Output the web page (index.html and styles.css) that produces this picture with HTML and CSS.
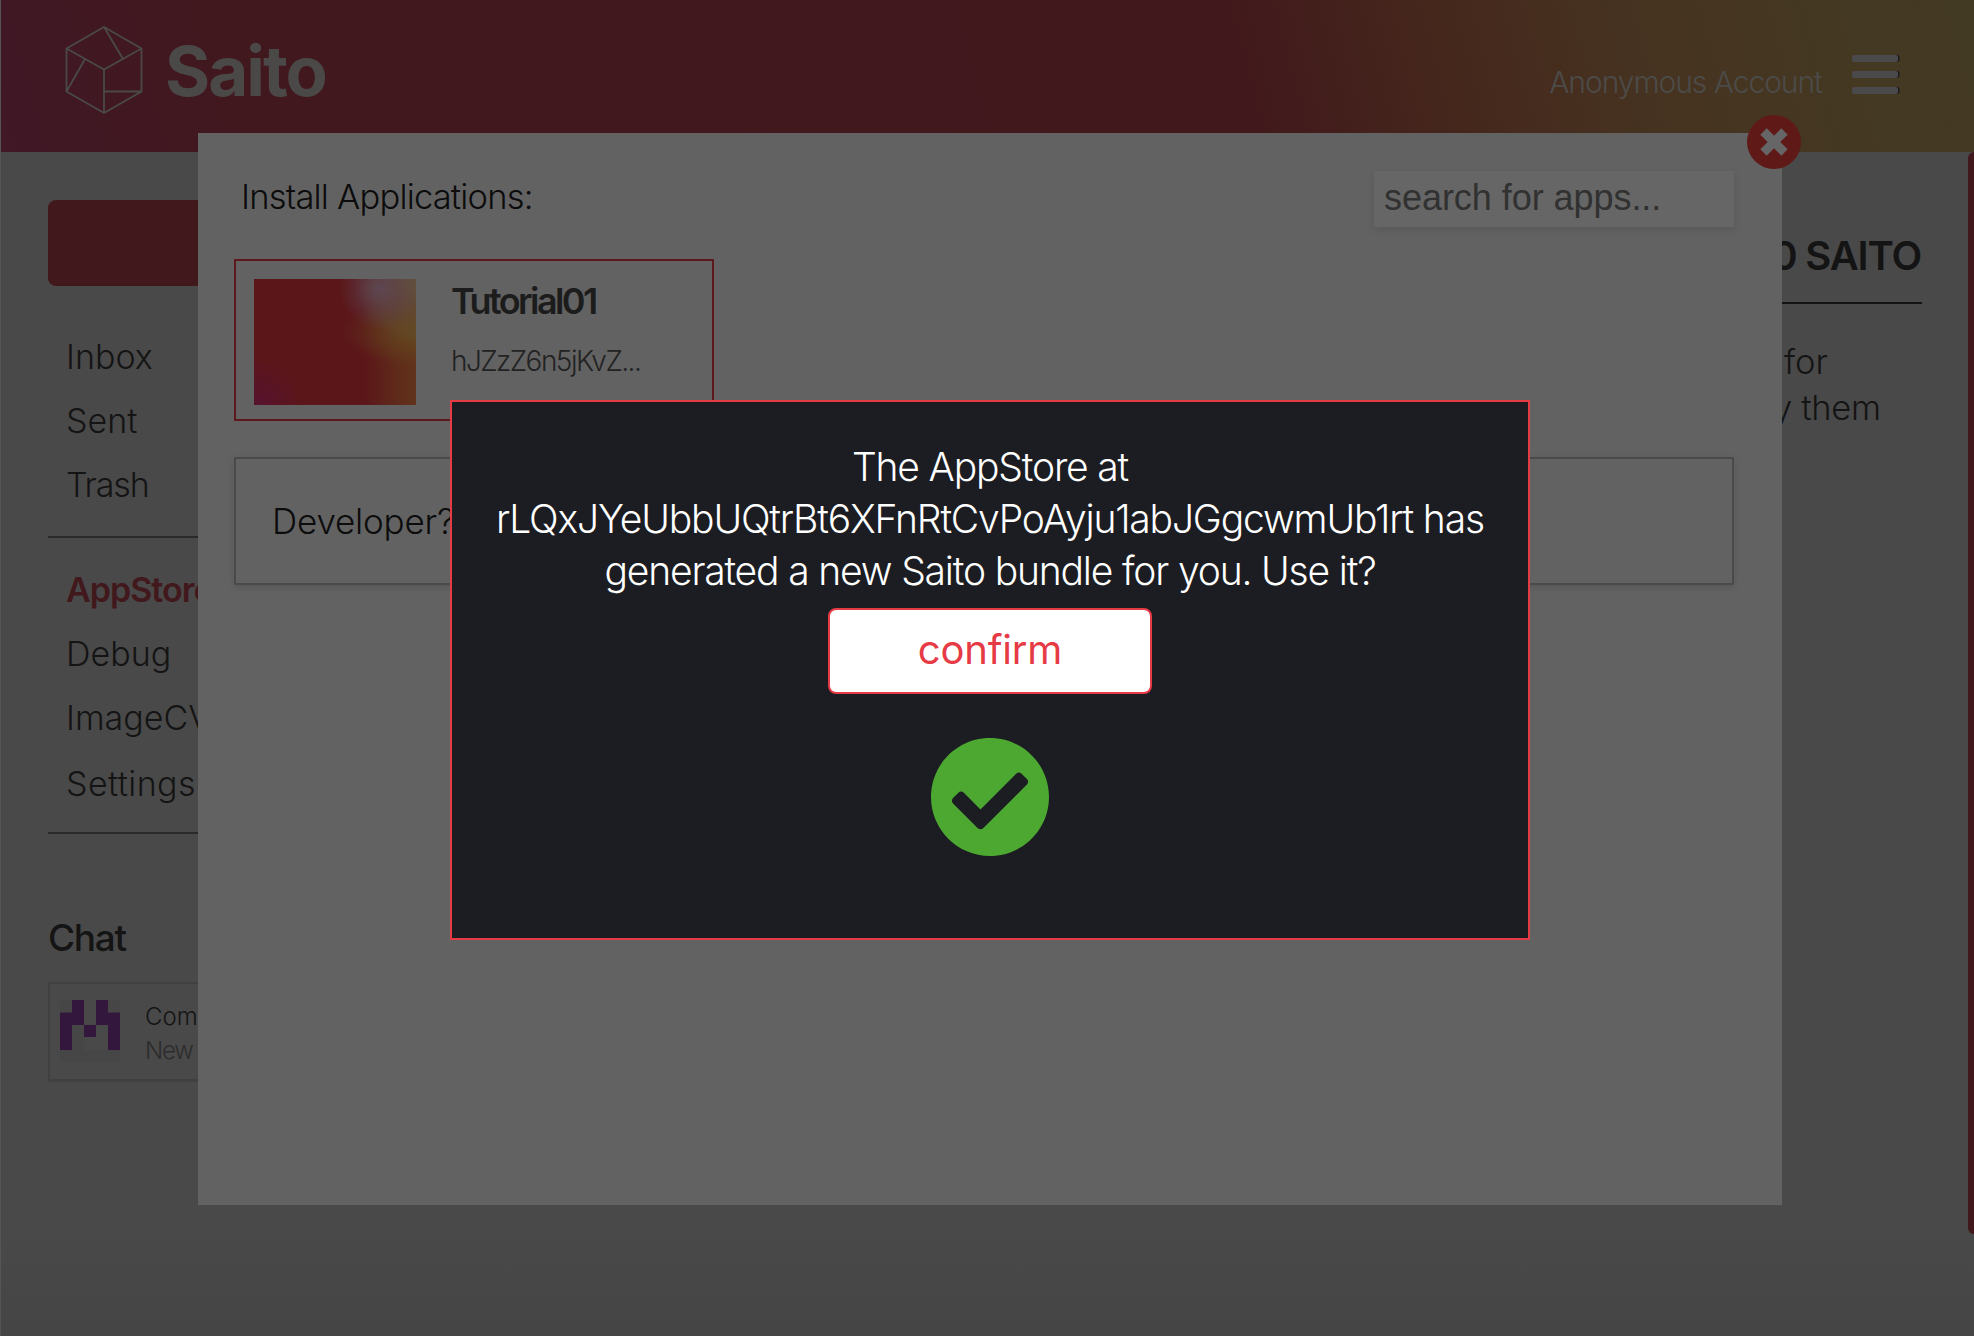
FILE: index.html
```html
<!DOCTYPE html>
<html lang="en">
<head>
<meta charset="utf-8">
<title>Saito</title>
<link rel="stylesheet" href="styles.css">
</head>
<body>
<div class="page">
  <header class="header">
    <div class="brand">
      <svg class="brand-mark" width="80" height="90" viewBox="0 0 80 90" fill="none" stroke="#4a4948" stroke-width="1.8" stroke-linejoin="round">
        <path d="M40 2 77.500 23.500V66.500L40 88 2.500 66.500V23.500ZM2.500 23.500 40 44.500 77.500 23.500M40 44.500V88M40 2 59 34M2.500 66.500 21 34M40 66.500H77.500"/>
      </svg>
      <span class="brand-name">Saito</span>
    </div>
    <div class="account">
      <span class="account-name">Anonymous Account</span>
      <div class="menu-icon"><i></i><i></i><i></i></div>
    </div>
  </header>

  <div class="body">
    <aside class="sidebar">
      <div class="compose"></div>
      <nav class="nav">
        <a>Inbox</a>
        <a>Sent</a>
        <a class="tight">Trash</a>
      </nav>
      <nav class="nav nav-apps">
        <a class="active">AppStore</a>
        <a>Debug</a>
        <a>ImageCV</a>
        <a class="settings">Settings</a>
      </nav>
      <h2 class="chat-title">Chat</h2>
      <div class="chat">
        <svg class="avatar" width="60" height="62" viewBox="0 0 60 62">
          <path fill="#464646" d="M0 0h60v62H0z"/>
          <path fill="#494949" d="M24 0h12v24H24zM12 25h12v25h24V25H36v12H24V25z"/>
          <path fill="#34173d" d="M12 0h12v25H12v25H0V12.500h12zM36 0h12v12.500h12V50H48V25H36zM24 25h12v12H24z"/>
        </svg>
        <div class="chat-text">
          <span class="chat-name">Com</span>
          <span class="chat-preview">New</span>
        </div>
      </div>
    </aside>
    <section class="balance">
      <h2 class="balance-title">0 SAITO</h2>
      <p class="balance-note"><span>for</span><span class="outdent">y them</span></p>
    </section>
    <div class="edge"></div>
  </div>

  <section class="modal">
    <div class="modal-head">
      <h1 class="modal-title">Install Applications:</h1>
      <div class="search">search for apps...</div>
    </div>
    <div class="app">
      <div class="app-image"></div>
      <div class="app-text">
        <span class="app-name">Tutorial01</span>
        <span class="app-id">hJZzZ6n5jKvZ...</span>
      </div>
    </div>
    <div class="developer">Developer?</div>
    <svg class="close" width="54" height="54" viewBox="0 0 54 54">
      <circle cx="27" cy="27" r="27" fill="#5f1916"/>
      <path d="M16.500 16.500 37.500 37.500M37.500 16.500 16.500 37.500" stroke="#666" stroke-width="9"/>
    </svg>
  </section>

  <section class="dialog">
    <p class="message">The AppStore at<br>rLQxJYeUbbUQtrBt6XFnRtCvPoAyju1abJGgcwmUb1rt has<br>generated a new Saito bundle for you. Use it?</p>
    <button class="confirm">confirm</button>
    <svg class="check" width="118" height="118" viewBox="8 8 496 496">
      <path fill="#4ca830" d="M504 256c0 136.967-111.033 248-248 248S8 392.967 8 256 119.033 8 256 8s248 111.033 248 248zM227.314 387.314l184-184c6.248-6.248 6.248-16.379 0-22.627l-22.627-22.627c-6.248-6.249-16.379-6.249-22.628 0L216 308.118l-70.059-70.059c-6.248-6.248-16.379-6.248-22.628 0l-22.627 22.627c-6.248 6.248-6.248 16.379 0 22.627l104 104c6.249 6.249 16.379 6.249 22.628.001z"/>
    </svg>
  </section>
</div>
</body>
</html>
```
FILE: styles.css
```css
* { box-sizing: border-box; }
body { margin: 0; }
h1, h2, p { margin: 0; font-weight: 300; }

.page {
  position: relative;
  display: flex;
  flex-direction: column;
  width: 1974px;
  height: 1336px;
  overflow: hidden;
  background: linear-gradient(#494949 92%, #454545);
  border-left: 1px solid #555;
  font-family: Inter, "Liberation Sans", sans-serif;
  font-weight: 300;
  color: #141414;
}

/* Header */
.header {
  display: flex;
  justify-content: space-between;
  height: 152px;
  padding: 0 76px 0 63px;
  background: linear-gradient(75deg, #401826 0, #41181e 12%, #41181c 62%, #45261c 72%, #463220 82%, #443922 94%, #433a24);
}
.brand { display: flex; gap: 21px; padding-top: 25px; }
.brand-name {
  font-size: 69px;
  font-weight: 700;
  line-height: 92px;
  letter-spacing: -2px;
  color: #4a4948;
}
.account { display: flex; gap: 30px; }
.account-name {
  padding-top: 62px;
  font-size: 30px;
  line-height: 40px;
  letter-spacing: -1.05px;
  color: #4c4b49;
}
.menu-icon {
  display: flex;
  flex-direction: column;
  gap: 8.5px;
  padding-top: 54.5px;
}
.menu-icon i {
  width: 46px;
  height: 7.5px;
  border-radius: 2px;
  background: #4a494b;
  box-shadow: 1.5px 0 0 #1c1a1a;
}

/* Page behind the overlay */
.body { display: flex; justify-content: space-between; flex: 1; }
.sidebar { width: 330px; padding: 48px 0 0 47px; }
.compose { height: 86px; border-radius: 8px; background: #41181c; }
.nav {
  display: flex;
  flex-direction: column;
  margin-top: 39px;
  padding: 0 0 19px 18px;
  border-bottom: 2px solid #2a2a2a;
  font-size: 34px;
  line-height: 64px;
}
.nav-apps { margin-top: 20px; padding-bottom: 16px; }
.tight { letter-spacing: -1.1px; }
.active { font-weight: 600; letter-spacing: -1px; color: #41181c; }
.settings { padding-top: 2px; letter-spacing: 0.4px; }
.chat-title {
  margin-top: 79px;
  font-size: 37px;
  font-weight: 500;
  line-height: 50px;
  letter-spacing: -1.3px;
  white-space: nowrap;
}
.chat {
  display: flex;
  gap: 25px;
  height: 100px;
  margin-top: 19px;
  padding: 16px 10px;
  border: 2px solid #404040;
  border-bottom-width: 3px;
}
.chat-text { display: flex; flex-direction: column; font-size: 24px; line-height: 34px; }
.chat-preview { letter-spacing: -1.2px; color: #2c2c2c; }

.balance { flex: none; width: 170px; margin: 78px 46px 0 auto; text-align: right; }
.balance-title {
  padding: 0 1px 20px 0;
  border-bottom: 2px solid #141414;
  font-size: 40px;
  font-weight: 600;
  line-height: 52px;
  letter-spacing: -1.2px;
}
.balance-note {
  display: flex;
  flex-direction: column;
  align-items: flex-start;
  padding: 35px 0 0 32px;
  font-size: 34.500px;
  line-height: 46px;
}
.outdent { margin-left: -11px; letter-spacing: -0.3px; }
.edge { width: 6px; height: 1082px; border-radius: 6px 0 0 6px; background: #41181c; }

/* Install overlay */
.modal {
  position: absolute;
  left: 197px;
  top: 133px;
  width: 1584px;
  height: 1072px;
  padding: 38px 48px 0 36px;
  background: #626262;
}
.modal-head { display: flex; justify-content: space-between; height: 88px; }
.modal-title {
  padding: 1px 0 0 7px;
  font-size: 34.500px;
  line-height: 50px;
  letter-spacing: -0.8px;
  color: #0c0c0c;
}
.search {
  width: 360px;
  height: 56px;
  padding-left: 10px;
  background: #666;
  box-shadow: 0 3px 8px rgba(0, 0, 0, 0.1);
  font: 400 36px/53px "Liberation Sans", sans-serif;
  letter-spacing: -0.05px;
  color: #313131;
}
.app {
  display: flex;
  gap: 35px;
  width: 480px;
  height: 162px;
  padding: 18px;
  border: 2px solid #5c181c;
}
.app-image {
  width: 162px;
  height: 126px;
  background:
    radial-gradient(circle at 78% 8%, rgba(93, 72, 84, 0.95) 0, rgba(93, 70, 86, 0) 24%),
    radial-gradient(circle at 104% 0, #62543f 0, rgba(98, 84, 63, 0) 32%),
    radial-gradient(ellipse at 104% 42%, #64491f 0, rgba(100, 73, 31, 0) 34%),
    radial-gradient(circle at 0 100%, #571230 0, rgba(87, 18, 48, 0) 24%),
    linear-gradient(90deg, #5b1619 68%, #5f2a1a 88%, #61331b);
}
.app-text { display: flex; flex-direction: column; }
.app-name {
  font-size: 36px;
  font-weight: 600;
  line-height: 44px;
  letter-spacing: -2.6px;
  color: #1c1c1c;
}
.app-id {
  padding-top: 18px;
  font-size: 28px;
  line-height: 41px;
  letter-spacing: -1.55px;
  color: #222;
}
.developer {
  width: 1500px;
  height: 128px;
  margin-top: 36px;
  padding-left: 36px;
  border: 2px solid #4a4a4a;
  box-shadow: 0 2px 6px rgba(0, 0, 0, 0.12);
  font-size: 35px;
  line-height: 124px;
  letter-spacing: -0.2px;
  color: #0c0c0c;
}
.close { position: absolute; right: -19px; top: -18px; }

/* Confirmation dialog */
.dialog {
  position: absolute;
  left: 449px;
  top: 400px;
  display: flex;
  flex-direction: column;
  align-items: center;
  width: 1080px;
  height: 540px;
  padding-top: 39px;
  border: 2px solid #e63a45;
  background: #1c1d22;
}
.message {
  font-size: 39px;
  line-height: 52px;
  letter-spacing: -1.17px;
  text-align: center;
  white-space: nowrap;
  color: #fff;
}
.confirm {
  width: 324px;
  height: 86px;
  margin: 11px 0 44px;
  padding: 0 0 2px;
  border: 2px solid #e63a45;
  border-radius: 8px;
  background: #fff;
  font: 400 40px/78px Inter, "Liberation Sans", sans-serif;
  letter-spacing: -0.2px;
  color: #e63a45;
}
```
